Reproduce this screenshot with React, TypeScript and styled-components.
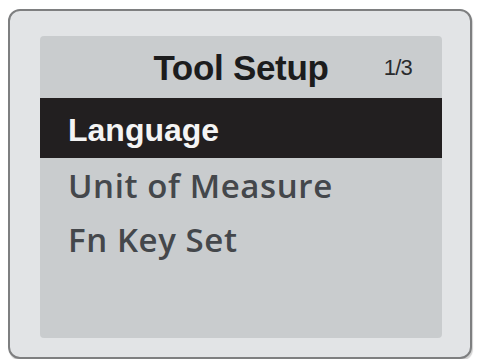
import React from "react";
import styled, { createGlobalStyle } from "styled-components";

const GlobalStyle = createGlobalStyle`
  html, body {
    margin: 0;
    padding: 0;
    background: #ffffff;
  }
  body {
    font-family: "Liberation Sans", Arial, sans-serif;
  }
`;

const Wrapper = styled.div`
  padding: 9px 8px 0 8px;
`;

const Device = styled.div`
  box-sizing: border-box;
  width: 464px;
  height: 350px;
  border: 2px solid #7e7f80;
  border-radius: 12px;
  background: #e2e4e6;
  box-shadow: 1px 2px 1px rgba(0, 0, 0, 0.18);
  padding: 25px 28px 19px 30px;
  display: flex;
`;

const Screen = styled.div`
  flex: 1;
  background: #c9ccce;
  border-radius: 4px;
  display: flex;
  flex-direction: column;
  overflow: hidden;
`;

const TitleBar = styled.div`
  position: relative;
  height: 62px;
  display: flex;
  align-items: center;
  justify-content: center;
`;

const Title = styled.span`
  font-family: "Liberation Sans", Arial, sans-serif;
  font-weight: 700;
  font-size: 35px;
  color: #1c1c1d;
  margin-top: 2px;
  letter-spacing: -0.3px;
`;

const PageCount = styled.span`
  position: absolute;
  right: 30px;
  top: 19px;
  font-family: "Liberation Sans", Arial, sans-serif;
  font-size: 22px;
  color: #2a2b2d;
  letter-spacing: -0.8px;
`;

const Row = styled.div<{ $selected?: boolean }>`
  height: ${(p) => (p.$selected ? 60 : 54)}px;
  display: flex;
  align-items: center;
  padding-left: 28px;
  background: ${(p) => (p.$selected ? "#221f20" : "transparent")};
  color: ${(p) => (p.$selected ? "#f4f4f4" : "#44474b")};
  font-family: ${(p) =>
    p.$selected
      ? `"Liberation Sans", Arial, sans-serif`
      : `"Open Sans", "Noto Sans", sans-serif`};
  font-weight: ${(p) => (p.$selected ? 700 : 600)};
  font-size: ${(p) => (p.$selected ? 32 : 33)}px;
  letter-spacing: ${(p) => (p.$selected ? 0 : 0.6)}px;
  padding-top: ${(p) => (p.$selected ? 4 : 0)}px;
  box-sizing: border-box;
`;

const items = ["Language", "Unit of Measure", "Fn Key Set"];

export default function App() {
  return (
    <>
      <GlobalStyle />
      <Wrapper>
        <Device>
          <Screen>
            <TitleBar>
              <Title>Tool Setup</Title>
              <PageCount>1/3</PageCount>
            </TitleBar>
            {items.map((label, i) => (
              <Row key={label} $selected={i === 0}>
                {label}
              </Row>
            ))}
          </Screen>
        </Device>
      </Wrapper>
    </>
  );
}
